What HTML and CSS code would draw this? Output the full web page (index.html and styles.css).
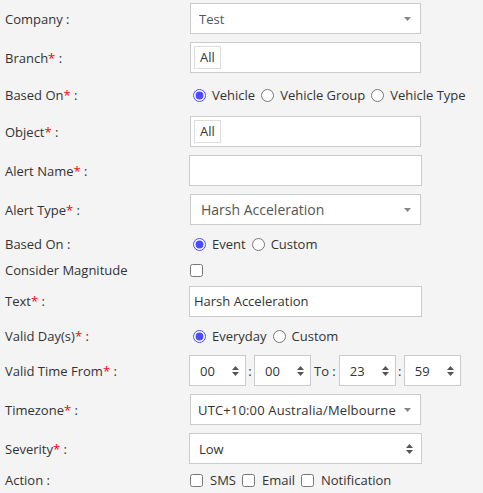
FILE: index.html
```html
<!DOCTYPE html>
<html lang="en">
<head>
    <meta charset="UTF-8">
    <meta name="viewport" content="width=device-width, initial-scale=1.0">
    <title>Alert Settings</title>
    <link rel="stylesheet" href="styles.css">
</head>
<body>
    <form class="alert-form" id="alertForm">
        <label class="field-label">Company :</label>
        <div class="field">
            <div class="select-wrap">
                <select class="select"><option>Test</option></select>
                <svg class="caret" width="7" height="4" viewBox="0 0 7 4"><path d="M0 0h7L3.5 4z"/></svg>
            </div>
        </div>

        <label class="field-label">Branch<span class="req">*</span> :</label>
        <div class="field">
            <div class="tag-input"><span class="tag">All</span></div>
        </div>

        <label class="field-label">Based On<span class="req">*</span> :</label>
        <div class="field options">
            <label class="opt"><input type="radio" name="basedOn" checked>Vehicle</label>
            <label class="opt"><input type="radio" name="basedOn">Vehicle Group</label>
            <label class="opt"><input type="radio" name="basedOn">Vehicle Type</label>
        </div>

        <label class="field-label">Object<span class="req">*</span> :</label>
        <div class="field">
            <div class="tag-input"><span class="tag">All</span></div>
        </div>

        <label class="field-label">Alert Name<span class="req">*</span> :</label>
        <div class="field">
            <input type="text" class="text-input" name="alertName">
        </div>

        <label class="field-label">Alert Type<span class="req">*</span> :</label>
        <div class="field">
            <div class="select-wrap">
                <select class="select select-lg"><option>Harsh Acceleration</option></select>
                <svg class="caret" width="7" height="4" viewBox="0 0 7 4"><path d="M0 0h7L3.5 4z"/></svg>
            </div>
        </div>

        <label class="field-label">Based On :</label>
        <div class="field options">
            <label class="opt"><input type="radio" name="trigger" checked>Event</label>
            <label class="opt"><input type="radio" name="trigger">Custom</label>
        </div>

        <label class="field-label">Consider Magnitude</label>
        <div class="field options">
            <input type="checkbox" class="check" name="magnitude">
        </div>

        <label class="field-label">Text<span class="req">*</span> :</label>
        <div class="field">
            <input type="text" class="text-input" value="Harsh Acceleration">
        </div>

        <label class="field-label">Valid Day(s)<span class="req">*</span> :</label>
        <div class="field options">
            <label class="opt"><input type="radio" name="days" checked>Everyday</label>
            <label class="opt"><input type="radio" name="days">Custom</label>
        </div>

        <label class="field-label">Valid Time From<span class="req">*</span> :</label>
        <div class="field time-row">
            <div class="spin-wrap">
                <input type="text" class="spin" value="00">
                <svg class="spinner" width="7" height="10" viewBox="0 0 7 10"><path d="M3.5 0L7 4H0zM0 6h7L3.5 10z"/></svg>
            </div>
            <span class="sep">:</span>
            <div class="spin-wrap">
                <input type="text" class="spin" value="00">
                <svg class="spinner" width="7" height="10" viewBox="0 0 7 10"><path d="M3.5 0L7 4H0zM0 6h7L3.5 10z"/></svg>
            </div>
            <span class="sep sep-to">To :</span>
            <div class="spin-wrap">
                <input type="text" class="spin" value="23">
                <svg class="spinner" width="7" height="10" viewBox="0 0 7 10"><path d="M3.5 0L7 4H0zM0 6h7L3.5 10z"/></svg>
            </div>
            <span class="sep">:</span>
            <div class="spin-wrap">
                <input type="text" class="spin" value="59">
                <svg class="spinner" width="7" height="10" viewBox="0 0 7 10"><path d="M3.5 0L7 4H0zM0 6h7L3.5 10z"/></svg>
            </div>
        </div>

        <label class="field-label">Timezone<span class="req">*</span> :</label>
        <div class="field">
            <div class="select-wrap">
                <select class="select select-tz"><option>UTC+10:00 Australia/Melbourne</option></select>
                <svg class="caret" width="7" height="4" viewBox="0 0 7 4"><path d="M0 0h7L3.5 4z"/></svg>
            </div>
        </div>

        <label class="field-label">Severity<span class="req">*</span> :</label>
        <div class="field">
            <div class="select-wrap select-wide">
                <select class="select"><option>Low</option><option>Medium</option><option>High</option></select>
                <svg class="spinner" width="7" height="10" viewBox="0 0 7 10"><path d="M3.5 0L7 4H0zM0 6h7L3.5 10z"/></svg>
            </div>
        </div>

        <label class="field-label">Action :</label>
        <div class="field options">
            <label class="opt opt-check"><input type="checkbox" class="check">SMS</label>
            <label class="opt opt-check"><input type="checkbox" class="check">Email</label>
            <label class="opt opt-check"><input type="checkbox" class="check">Notification</label>
        </div>
    </form>
</body>
</html>
```

FILE: styles.css
```css
body {
    font-family: 'Open Sans', 'Liberation Sans', Arial, sans-serif;
    font-size: 13px;
    color: #333;
    background: #f4f4f4;
    margin: 0;
    padding: 0;
}
.alert-form {
    display: grid;
    grid-template-columns: 189px 294px;
    grid-template-rows: 37px 41px 34px 39px 39px 39px 30px 22px 40px 30px 39px 39px 39px 24px;
    align-items: center;
}
.field-label {
    padding-left: 5px;
    color: #333;
}
.req {
    color: #f00;
}
.field {
    display: flex;
    align-items: center;
    white-space: nowrap;
}
.select-wrap {
    position: relative;
    margin-left: 1px;
    width: 231px;
}
.select-wrap.select-wide {
    margin-left: 0;
    width: 233px;
}
.select {
    appearance: none;
    -webkit-appearance: none;
    width: 100%;
    height: 31px;
    padding: 0 18px 0 8px;
    border: 1px solid #ccc;
    border-radius: 0;
    background: #fff;
    font-family: inherit;
    font-size: 13px;
    color: #555;
    box-sizing: border-box;
    outline: none;
}
.select-lg {
    font-size: 14px;
    padding-left: 10px;
}
.select-tz {
    letter-spacing: 0.15px;
    padding-left: 7px;
    color: #333;
}
.select-wide .select {
    padding-left: 9px;
    color: #333;
}
.caret {
    position: absolute;
    right: 10px;
    top: 14px;
    fill: #888;
    pointer-events: none;
}
.select-wrap .spinner {
    right: 9px;
    top: 11px;
}
.spinner {
    position: absolute;
    right: 7px;
    top: 11px;
    fill: #555;
    pointer-events: none;
}
.tag-input {
    margin-left: 1px;
    width: 231px;
    height: 31px;
    padding: 3px;
    border: 1px solid #ccc;
    background: #fff;
    box-sizing: border-box;
    display: flex;
    align-items: center;
}
.tag {
    display: inline-block;
    height: 23px;
    line-height: 21px;
    padding: 0 5px;
    border: 1px solid #ddd;
    box-sizing: border-box;
    color: #333;
}
.text-input {
    width: 233px;
    height: 31px;
    padding: 0 4px;
    border: 1px solid #ccc;
    background: #fff;
    font-family: inherit;
    font-size: 13px;
    color: #333;
    box-sizing: border-box;
    outline: none;
}
.opt {
    display: inline-flex;
    align-items: center;
    margin-right: 2px;
}
.opt input[type="radio"] {
    accent-color: #4b4bff;
    width: 13px;
    height: 13px;
    margin: 0 6px 0 4px;
}
.check {
    width: 13px;
    height: 13px;
    margin: 0 7px 0 1px;
}
.opt-check {
    margin-right: 5px;
}
.time-row .spin-wrap {
    position: relative;
    flex: 0 0 57px;
}
.spin {
    width: 100%;
    height: 31px;
    padding: 0 18px 0 10px;
    border: 1px solid #ccc;
    background: #fff;
    font-family: inherit;
    font-size: 13px;
    color: #333;
    box-sizing: border-box;
    outline: none;
}
.sep {
    flex: 0 0 8px;
    text-align: center;
}
.sep-to {
    flex: 0 0 auto;
    margin: 0 3px 0 3px;
}
```
